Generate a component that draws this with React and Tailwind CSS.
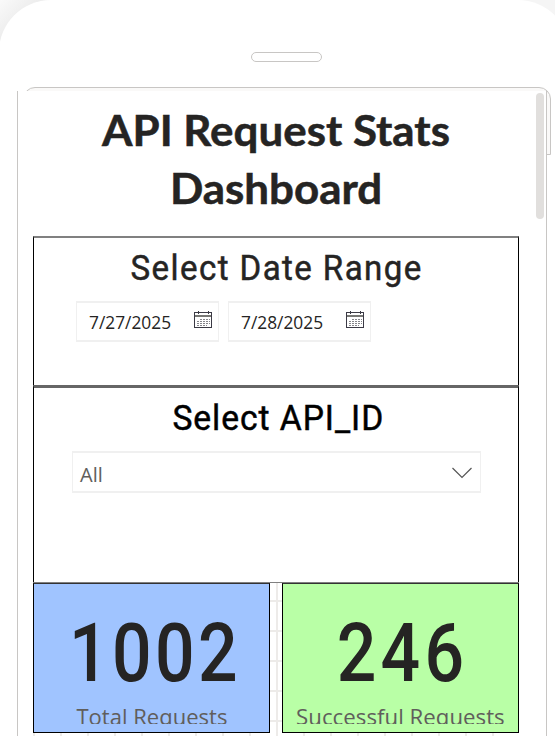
function Calendar() {
  return (
    <svg className="block h-[18px] w-[18px]" viewBox="0 0 18 18" shapeRendering="crispEdges" fill="none">
      <rect x="0.5" y="1.5" width="17" height="15" stroke="#3b3a45" />
      <path d="M4.5 0v3M14.5 0v3" stroke="#3b3a45" />
      <path d="M1 5h16" stroke="#777774" strokeWidth="2" />
      <path d="M6 8.5h10M3 10.5h13M3 12.5h13M3 14.5h10" stroke="#85858a" strokeDasharray="2 1" />
    </svg>
  );
}

function DateField({ value }) {
  return (
    <div className="flex h-[41px] w-[143px] items-start justify-between border border-y-2 border-[#f0f0f0] pl-3 pr-1.5">
      <span className="mt-[6px] inline-block origin-left scale-x-[0.99] whitespace-nowrap font-['Open_Sans',sans-serif] text-[17.5px] leading-[27px] text-[#252423]">
        {value}
      </span>
      <span className="mt-[8px]">
        <Calendar />
      </span>
    </div>
  );
}

function Stat({ value, label, color, valueClass, labelClass }) {
  return (
    <div className={"h-[150px] w-[237px] border border-black border-t-[#333] " + color}>
      <div className="h-[140px] overflow-hidden text-center">
        <div className="mt-[22px] h-[94px] font-['Roboto',sans-serif] text-[81px] font-medium leading-[96px] text-[#252423]">
          <span className={"inline-block whitespace-nowrap " + valueClass}>{value}</span>
        </div>
        <div className="font-['Open_Sans',sans-serif] text-[21px] leading-[34px] text-[#605e5c]">
          <span className={"inline-block whitespace-nowrap " + labelClass}>{label}</span>
        </div>
      </div>
    </div>
  );
}

export default function App() {
  return (
    <div className="relative h-[736px] w-[555px] overflow-hidden bg-[linear-gradient(135deg,#fafafa_0px,#ededed_28px,#f5f5f5_60px)]">
      <div className="relative -ml-px h-[740px] w-[571px] rounded-t-[52px] bg-white pl-px">
        <div className="ml-[251px] h-[52px] w-[71px] pt-[52px]">
          <div className="h-[10px] w-[71px] rounded-full border border-[#c8c6c4]" />
        </div>
        <div className="absolute left-[24px] top-[87px] h-[68px] w-[528px] rounded-t-[12px] border border-[#c8c6c4] bg-[#faf9f8]" />
        <main className="relative ml-[17px] mt-[39px] h-[645px] w-[530px] border-x border-[#c8c6c4] bg-white pl-[15px]">
          <div className="absolute right-[2px] top-[2px] h-[126px] w-[8px] rounded-full bg-[#e1dfdd]" />
          <h1 className="h-[145px] w-[486px] origin-center scale-x-[1.045] pt-[10px] text-center font-['Lato',sans-serif] text-[42px] font-bold leading-[58px] text-[#252423] [-webkit-text-stroke:0.5px_#252423]">
            <span className="block whitespace-nowrap">API Request Stats</span>
            <span className="block whitespace-nowrap">Dashboard</span>
          </h1>
          <section className="h-[149px] w-[486px] border-x border-t-2 border-black border-t-[#808080]">
            <h2 className="h-[63px] pt-[10px] text-center font-['Roboto',sans-serif] text-[35px] font-normal leading-[41px] text-[#252423] [-webkit-text-stroke:0.5px_#252423]">
              <span className="ml-[2px] inline-block scale-x-[0.945] whitespace-nowrap tracking-[1.5px]">Select Date Range</span>
            </h2>
            <div className="ml-[42px] flex gap-[9px]">
              <DateField value="7/27/2025" />
              <DateField value="7/28/2025" />
            </div>
          </section>
          <section className="h-[197px] w-[486px] border-x border-t-[3px] border-black border-t-[#666]">
            <h2 className="h-[63px] pt-[10px] text-center font-['Roboto',sans-serif] text-[35px] font-normal leading-[41px] text-black [-webkit-text-stroke:0.5px_black]">
              <span className="ml-[4px] inline-block scale-x-[0.96] whitespace-nowrap tracking-[1px]">Select API_ID</span>
            </h2>
            <div className="ml-[38px] flex h-[42px] w-[409px] items-start justify-between border border-y-2 border-[#f0f0f0] pl-[7px] pr-2">
              <span className="mt-[8px] font-['Open_Sans',sans-serif] text-[20px] leading-[27px] text-[#605e5c]">All</span>
              <svg className="mt-[14px] h-[12px] w-[20px]" viewBox="0 0 20 12" fill="none">
                <path d="M0.5 1L10 10.5L19.5 1" stroke="#555" strokeWidth="1.2" />
              </svg>
            </div>
          </section>
          <div className="flex h-[155px] w-[486px] flex-col bg-[linear-gradient(#edebe9_2px,transparent_2px),linear-gradient(90deg,#edebe9_2px,transparent_2px)] bg-[length:27px_30px] bg-[position:0px_18px]">
            <div className="h-px shrink-0 bg-[#808080]" />
            <div className="flex justify-between">
              <Stat value="1002" label="Total Requests" color="bg-[#a0c4ff]" valueClass="ml-[7px] scale-x-[0.86] tracking-[4px]" labelClass="scale-x-[1.05]" />
              <Stat value="246" label="Successful Requests" color="bg-[#b9ffa6]" valueClass="ml-[5px] scale-x-[0.86] tracking-[5px]" labelClass="scale-x-[1.06]" />
            </div>
          </div>
        </main>
      </div>
    </div>
  );
}
